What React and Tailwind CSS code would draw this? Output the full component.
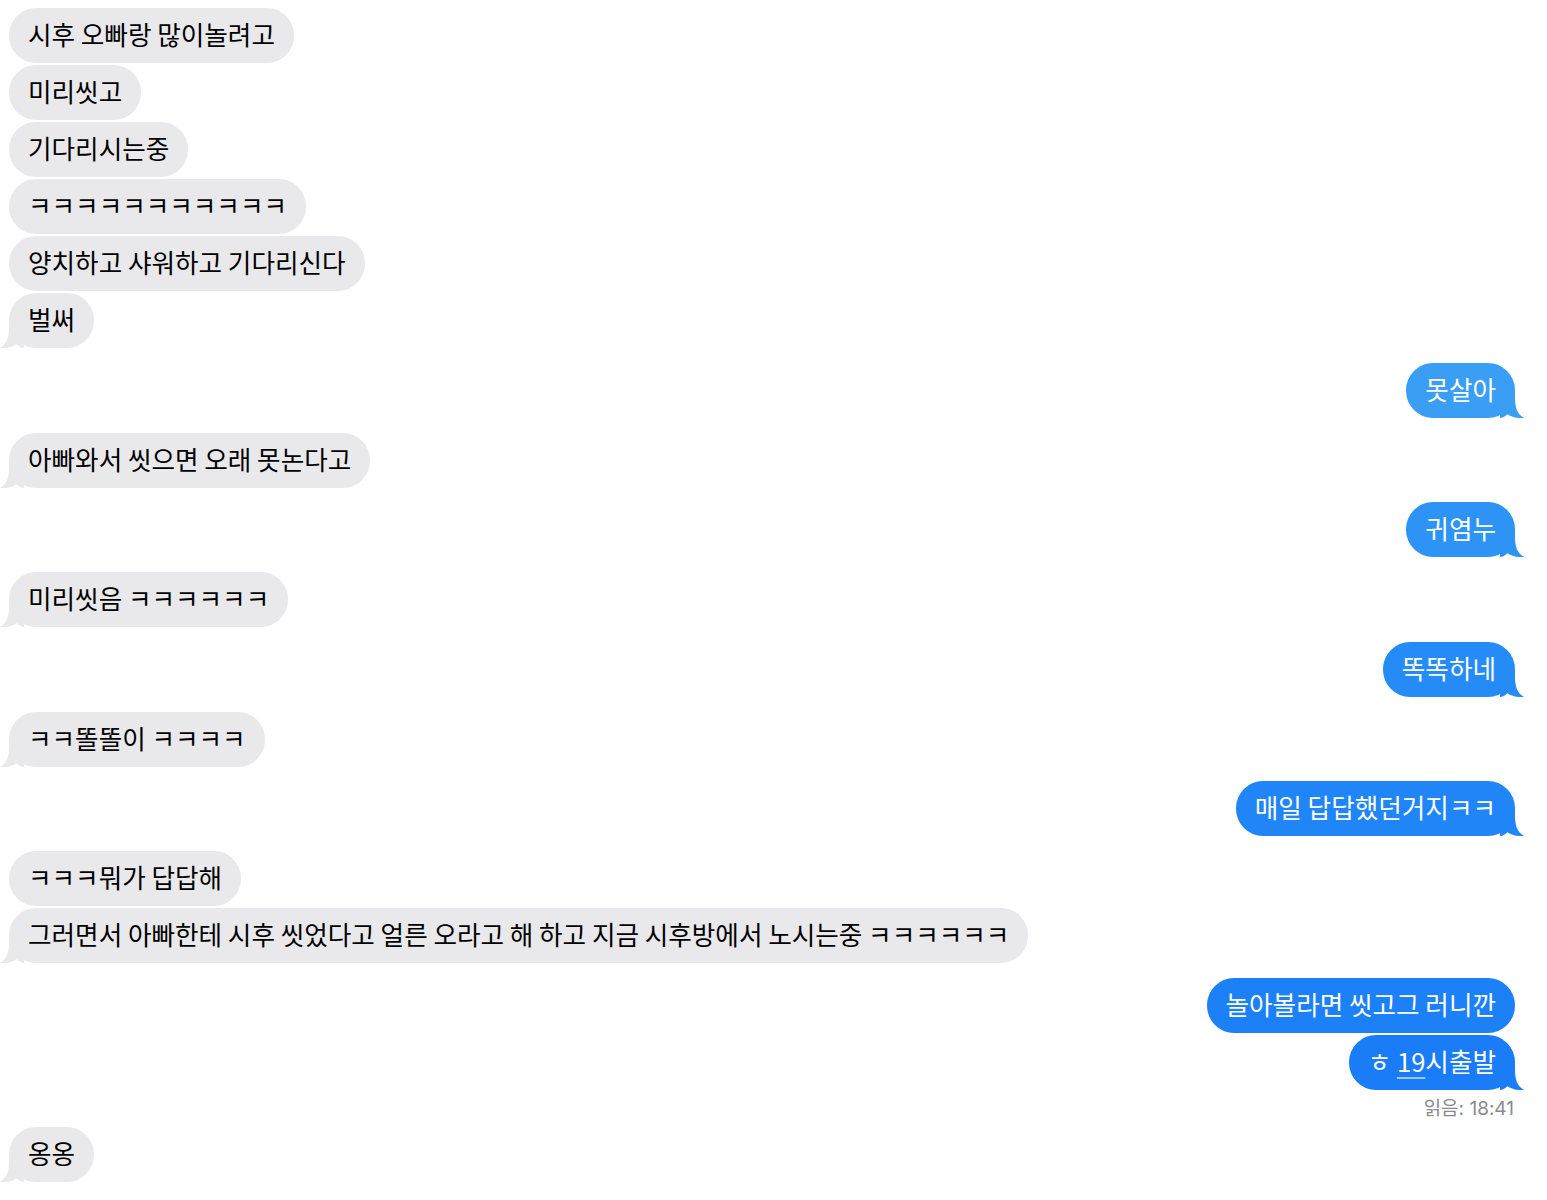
import React from "react";

const messages = [
	{ from: "them", group: [
		"시후 오빠랑 많이놀려고",
		"미리씻고",
		"기다리시는중",
		"ㅋㅋㅋㅋㅋㅋㅋㅋㅋㅋㅋ",
		"양치하고 샤워하고 기다리신다",
		"벌써",
	] },
	{ from: "me", group: ["못살아"], colors: ["#3a9ef5"] },
	{ from: "them", group: ["아빠와서 씻으면 오래 못논다고"] },
	{ from: "me", group: ["귀염누"], colors: ["#2d94f6"] },
	{ from: "them", group: ["미리씻음 ㅋㅋㅋㅋㅋㅋ"] },
	{ from: "me", group: ["똑똑하네"], colors: ["#258bf6"] },
	{ from: "them", group: ["ㅋㅋ똘똘이 ㅋㅋㅋㅋ"] },
	{ from: "me", group: ["매일 답답했던거지ㅋㅋ"], colors: ["#2085f7"] },
	{ from: "them", group: [
		"ㅋㅋㅋ뭐가 답답해",
		"그러면서 아빠한테 시후 씻었다고 얼른 오라고 해 하고 지금 시후방에서 노시는중 ㅋㅋㅋㅋㅋㅋ",
	] },
	{ from: "me", group: ["놀아볼라면 씻고그 러니깐", "19"], colors: ["#1c80f7", "#1a7df7"], read: "읽음: 18:41" },
	{ from: "them", group: ["옹옹"] },
];

// bubble tail, drawn once and mirrored for the left side
const Tail = ({ side, color }) => (
	<svg
		width="24"
		height="26"
		viewBox="0 0 24 26"
		className={
			side === "me"
				? "absolute bottom-0 right-[-9px]"
				: "absolute bottom-0 left-[-9px] scale-x-[-1]"
		}
	>
		<path
			d="M0 0 H15 V6 C15 15 17 22 24 26 C17 26.4 11.5 25 7.5 22.2 C5 24.4 2.5 26 0 26 Z"
			fill={color}
		/>
	</svg>
);

const Bubble = ({ side, text, color, tail }) => {
	const isMe = side === "me";
	const bg = isMe ? color : "#e9e9eb";
	return (
		<div
			className={`relative flex h-[55px] items-center rounded-[27px] px-[19px] pb-[3px] text-[25.6px] leading-none ${
				isMe ? "text-white" : "text-black"
			}`}
			style={{ backgroundColor: bg }}
		>
			{text === "19" ? (
				<span>
					ㅎ{" "}
					<span className="underline decoration-[#9cc8fb] decoration-[1.5px] underline-offset-[5px]">19</span>
					시출발
				</span>
			) : (
				<span>{text}</span>
			)}
			{tail && <Tail side={side} color={bg} />}
		</div>
	);
};

export default function App() {
	return (
		<div
			className="min-h-screen w-[1547px] bg-white pl-[9px] pr-[32px] pt-[8px]"
			style={{ fontFamily: '"Noto Sans CJK KR", "Noto Sans", sans-serif' }}
		>
			<div className="flex flex-col gap-[14.75px]">
				{messages.map((m, i) => (
					<div
						key={i}
						className={`flex flex-col gap-[2px] ${
							m.from === "me" ? "items-end" : "items-start"
						}`}
					>
						{m.group.map((t, j) => (
							<Bubble
								key={j}
								side={m.from}
								text={t}
								color={m.colors ? m.colors[j] : undefined}
								tail={j === m.group.length - 1}
							/>
						))}
						{m.read && (
							<div
								className="mb-[-8px] mt-[6px] pr-[1px] text-[19px] leading-[22px] text-[#8a8a8e]"
								style={{ fontFamily: 'Inter, "Noto Sans CJK KR", sans-serif' }}
							>
								{m.read}
							</div>
						)}
					</div>
				))}
			</div>
		</div>
	);
}
